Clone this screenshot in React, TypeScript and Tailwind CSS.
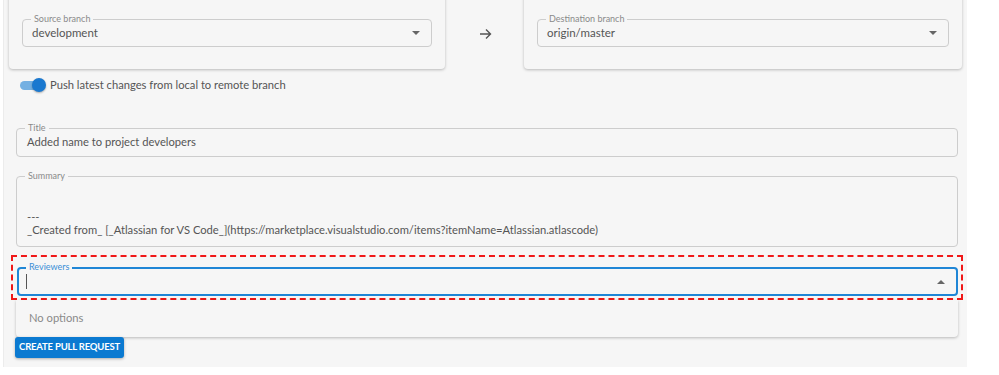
import React from "react";

const font = { fontFamily: '"Segoe UI", Lato, "Noto Sans", sans-serif' };

function Caret({ up = false }: { up?: boolean }) {
  return (
    <svg width="8" height="4" viewBox="0 0 10 5" className="shrink-0">
      {up ? <path d="M0 5 L5 0 L10 5 Z" fill="#666" /> : <path d="M0 0 L5 5 L10 0 Z" fill="#666" />}
    </svg>
  );
}

function SelectBox({ label, value }: { label: string; value: string }) {
  return (
    <div className="relative h-[28px] rounded-[4px] border border-[#cdcdcd] flex items-center pl-[9px] pr-[11px]">
      <span className="absolute left-[8px] top-[-7px] px-[3px] bg-[#f6f6f6] text-[9px] leading-[12px] text-[#8a8a8a]">{label}</span>
      <span className="flex-1 text-[11.5px] text-[#555]">{value}</span>
      <Caret />
    </div>
  );
}

function Card({ children, className }: { children: React.ReactNode; className: string }) {
  return (
    <div className={"bg-[#f6f6f6] rounded-[4px] shadow-[0_1px_3px_rgba(0,0,0,0.25)] pt-[27px] pb-[22px] px-[13px] " + className}>
      {children}
    </div>
  );
}

export default function App() {
  return (
    <div className="w-[999px] h-[375px] bg-white overflow-hidden" style={font}>
      <div className="ml-[3px] w-[964px] h-full bg-[#f6f6f6] border-l border-[#ececec]">
        <div className="flex items-start -mt-[8px] pl-[5px]">
          <Card className="w-[436px]">
            <SelectBox label="Source branch" value="development" />
          </Card>
          <div className="w-[79px] h-[77px] flex items-center justify-center pt-[6px] pl-[2px]">
            <svg width="13" height="12" viewBox="0 0 13 12">
              <path d="M1 6 H11.5 M7 1.5 L11.5 6 L7 10.5" stroke="#555" strokeWidth="1.4" fill="none" />
            </svg>
          </div>
          <Card className="w-[438px]">
            <SelectBox label="Destination branch" value="origin/master" />
          </Card>
        </div>

        <div className="flex items-center mt-[8px] ml-[15px] h-[16px]">
          <div className="relative w-[28px] h-[16px] flex items-center">
            <div className="ml-[1px] w-[24px] h-[9px] rounded-full bg-[#74b0e2]" />
            <div className="absolute left-[13px] top-[1px] w-[14px] h-[14px] rounded-full bg-[#1a78cf] shadow-[0_1px_2px_rgba(0,0,0,0.3)]" />
          </div>
          <span className="ml-[3px] text-[11.2px] text-[#555]">Push latest changes from local to remote branch</span>
        </div>

        <div className="ml-[12px] mr-[9px] mt-[35px] relative h-[29px] rounded-[4px] border border-[#cdcdcd] flex items-center pl-[10px]">
          <span className="absolute left-[8px] top-[-7px] px-[3px] bg-[#f6f6f6] text-[9px] leading-[12px] text-[#8a8a8a]">Title</span>
          <span className="text-[11.2px] text-[#555]">Added name to project developers</span>
        </div>

        <div className="ml-[12px] mr-[9px] mt-[19px] relative h-[71px] rounded-[4px] border border-[#cdcdcd] flex flex-col justify-end pl-[10px] pb-[9px]">
          <span className="absolute left-[8px] top-[-7px] px-[3px] bg-[#f6f6f6] text-[9px] leading-[12px] text-[#8a8a8a]">Summary</span>
          <span className="text-[11.2px] leading-[12px] text-[#555]">---</span>
          <span className="text-[11.2px] leading-[14px] text-[#555]">_Created from_ [_Atlassian for VS Code_](https://marketplace.visualstudio.com/items?itemName=Atlassian.atlascode)</span>
        </div>

        <div className="ml-[7px] mr-[4px] mt-[8px] border-2 border-dashed border-[#f01818] pt-[10px] pb-[2px] pl-[4px] pr-[3px]">
          <div className="relative h-[29px] rounded-[4px] border-2 border-[#1f86d6] flex items-center pl-[7px] pr-[11px]">
            <span className="absolute left-[7px] top-[-8px] px-[3px] bg-[#f6f6f6] text-[9px] leading-[12px] text-[#3b8fd6]">Reviewers</span>
            <span className="w-px h-[15px] bg-[#555]" />
            <span className="flex-1" />
            <Caret up />
          </div>
        </div>

        <div className="ml-[12px] mr-[9px] h-[37px] bg-[#f6f6f6] rounded-b-[4px] shadow-[0_1px_3px_rgba(0,0,0,0.25)] flex items-center pl-[13px]">
          <span className="text-[11.2px] text-[#8a8a8a]">No options</span>
        </div>

        <div className="flex">
          <button className="ml-[11px] w-[109px] h-[21px] rounded-[3px] bg-[#0b7ad1] text-white text-[9.5px] font-bold tracking-[-0.2px] whitespace-nowrap shadow-[0_1px_3px_rgba(0,0,0,0.3)] flex items-center justify-center">
            CREATE PULL REQUEST
          </button>
        </div>
      </div>
    </div>
  );
}
